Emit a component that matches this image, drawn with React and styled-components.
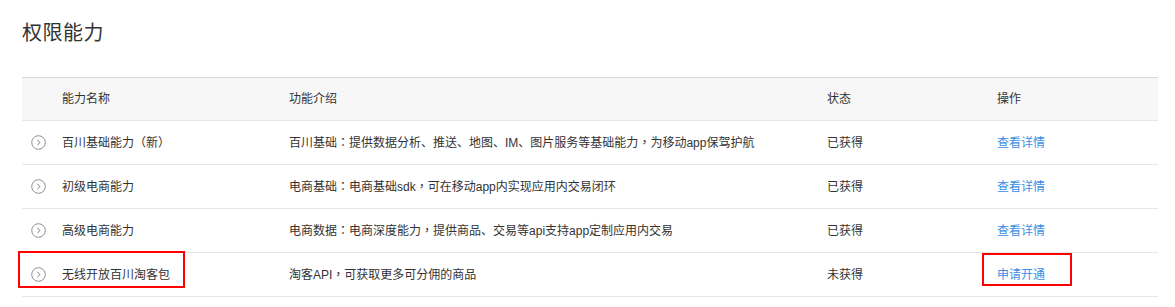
import React from 'react'
import styled, { createGlobalStyle } from 'styled-components'

const GlobalStyle = createGlobalStyle`
  body {
    margin: 0;
    background: #fff;
    font-family: "Liberation Sans", "Noto Sans CJK SC", sans-serif;
    color: #333;
  }
`

const Page = styled.div`
  padding: 21px 17px 0 22px;
`

const Title = styled.h2`
  margin: 0;
  font-size: 20px;
  font-weight: normal;
  line-height: 24px;
  color: #333;
  letter-spacing: 0.5px;
`

const Table = styled.div`
  margin-top: 32px;
  border-top: 1px solid #d9d9d9;
  width: 1136px;
`

const Row = styled.div`
  display: grid;
  grid-template-columns: 40px 227px 538px 170px 1fr;
  align-items: center;
  height: ${p => (p.$head ? 42 : 43)}px;
  border-bottom: 1px solid #e6e6e6;
  background: ${p => (p.$head ? '#f7f7f7' : '#fff')};
  font-size: 12px;
  color: #333;
`

const Cell = styled.div`
  position: relative;
  white-space: nowrap;
  line-height: 16px;
`

const Punct = styled.span`
  font-family: "Noto Sans CJK TC", sans-serif;
`

const Highlight = styled.span`
  position: absolute;
  border: 2px solid #f00;
  pointer-events: none;
  left: ${p => p.$left}px;
  top: ${p => p.$top}px;
  width: ${p => p.$w}px;
  height: ${p => p.$h}px;
  box-sizing: border-box;
`

const Link = styled.a`
  color: #3a8ee6;
  text-decoration: none;
  cursor: pointer;
`

const ExpandIcon = styled.svg`
  display: block;
  margin-left: 9px;
  margin-top: -1px;
`

const Expand = () => (
  <ExpandIcon width="15" height="15" viewBox="0 0 15 15">
    <circle cx="7.5" cy="7.5" r="6.8" fill="none" stroke="#8f8f8f" strokeWidth="1" />
    <path d="M6.3 4.8 L9 7.5 L6.3 10.2" fill="none" stroke="#7a7a7a" strokeWidth="1" />
  </ExpandIcon>
)

// full-width punctuation sits centred in the original, so wrap it
const withPunct = text =>
  text.split(/([：，（）])/).map((part, i) =>
    /^[：，（）]$/.test(part) ? <Punct key={i}>{part}</Punct> : part
  )

const rows = [
  {
    name: '百川基础能力（新）',
    desc: '百川基础：提供数据分析、推送、地图、IM、图片服务等基础能力，为移动app保驾护航',
    status: '已获得',
    action: '查看详情',
  },
  {
    name: '初级电商能力',
    desc: '电商基础：电商基础sdk，可在移动app内实现应用内交易闭环',
    status: '已获得',
    action: '查看详情',
  },
  {
    name: '高级电商能力',
    desc: '电商数据：电商深度能力，提供商品、交易等api支持app定制应用内交易',
    status: '已获得',
    action: '查看详情',
  },
  {
    name: '无线开放百川淘客包',
    desc: '淘客API，可获取更多可分佣的商品',
    status: '未获得',
    action: '申请开通',
    marked: true,
  },
]

export default function App() {
  return (
    <>
      <GlobalStyle />
      <Page>
        <Title>权限能力</Title>
        <Table>
          <Row $head>
            <Cell />
            <Cell>能力名称</Cell>
            <Cell>功能介绍</Cell>
            <Cell>状态</Cell>
            <Cell>操作</Cell>
          </Row>
          {rows.map(r => (
            <Row key={r.name}>
              <Cell>
                <Expand />
                {r.marked && <Highlight $left={-4} $top={-17} $w={167} $h={37} />}
              </Cell>
              <Cell>{withPunct(r.name)}</Cell>
              <Cell>{withPunct(r.desc)}</Cell>
              <Cell>{r.status}</Cell>
              <Cell>
                <Link>{r.action}</Link>
                {r.marked && <Highlight $left={-15} $top={-14} $w={90} $h={33} />}
              </Cell>
            </Row>
          ))}
        </Table>
      </Page>
    </>
  )
}
